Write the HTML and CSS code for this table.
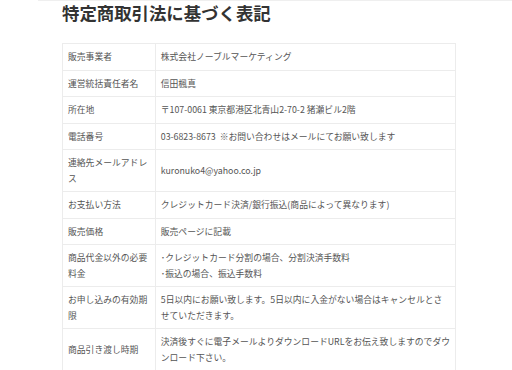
FILE: index.html
```html
<!DOCTYPE html>
<html lang="ja">
<head>
<meta charset="utf-8">
<title>特定商取引法に基づく表記</title>
<link rel="stylesheet" href="styles.css">
</head>
<body>
<div class="page">
  <h1 class="title">特定商取引法に基づく表記</h1>
  <table class="law">
    <tr><th>販売事業者</th><td>株式会社ノーブルマーケティング</td></tr>
    <tr><th>運営統括責任者名</th><td>信田楓真</td></tr>
    <tr><th>所在地</th><td>〒107-0061 東京都港区北青山2-70-2 猪瀬ビル2階</td></tr>
    <tr><th>電話番号</th><td>03-6823-8673&nbsp; ※お問い合わせはメールにてお願い致します</td></tr>
    <tr><th>連絡先メールアドレス</th><td>kuronuko4@yahoo.co.jp</td></tr>
    <tr><th>お支払い方法</th><td>クレジットカード決済/銀行振込(商品によって異なります)</td></tr>
    <tr><th>販売価格</th><td>販売ページに記載</td></tr>
    <tr><th>商品代金以外の必要料金</th><td>･クレジットカード分割の場合、分割決済手数料<br>･振込の場合、振込手数料</td></tr>
    <tr><th>お申し込みの有効期限</th><td>5日以内にお願い致します。5日以内に入金がない場合はキャンセルとさせていただきます。</td></tr>
    <tr><th>商品引き渡し時期</th><td><span class="nowrap">決済後すぐに電子メールよりダウンロードURLをお伝え致しますのでダウ</span><br>ンロード下さい。</td></tr>
  </table>
</div>
</body>
</html>
```
FILE: styles.css
```css
html, body {
  margin: 0;
  padding: 0;
  background: #ffffff;
}
body {
  font-family: "Noto Sans CJK JP", "Noto Sans", sans-serif;
  color: #555555;
}
.page {
  margin-left: 38px;
  padding-left: 24px;
  border-top: 1px solid #efefef;
}
.title {
  margin: 0;
  font-size: 17.4px;
  line-height: 24px;
  font-weight: 700;
  color: #333333;
}
.law {
  margin-top: 18px;
  width: 394px;
  border-collapse: collapse;
  border: 1px solid #ececec;
  font-size: 8.8px;
  line-height: 15.5px;
}
.law th, .law td {
  border: 1px solid #ececec;
  padding: 5px;
  text-align: left;
  vertical-align: middle;
  font-weight: 400;
}
.law th {
  width: 83px;
}
.nowrap {
  white-space: nowrap;
}
```
